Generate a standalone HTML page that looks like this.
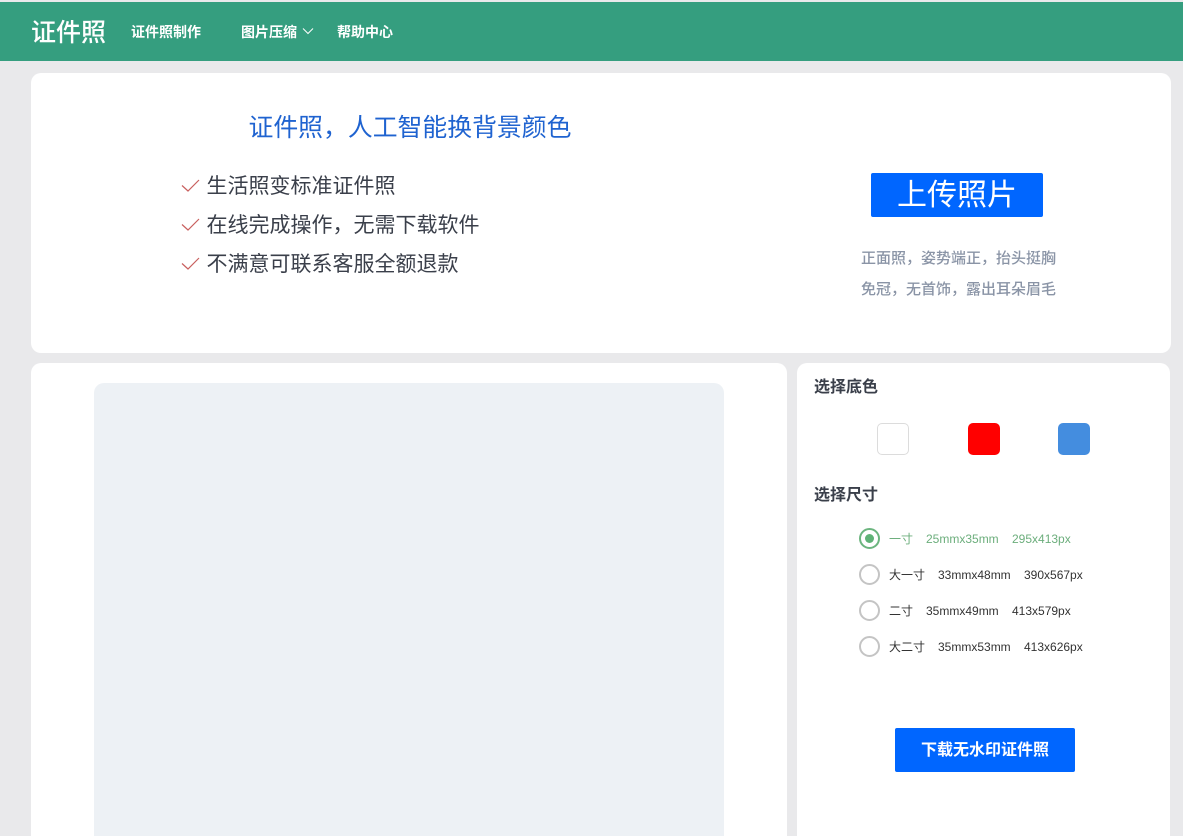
<!DOCTYPE html>
<html lang="zh">
<head>
<meta charset="utf-8">
<title>证件照</title>
<style>
*{box-sizing:border-box;margin:0;padding:0}
html,body{width:1183px;height:836px;overflow:hidden;background:#e9e9eb;font-family:"Liberation Sans","Noto Sans CJK SC",sans-serif}
#w{position:relative;width:1183px;height:836px;overflow:hidden;background:#e9e9eb}
.a{position:absolute;white-space:nowrap}
.card{position:absolute;background:#fff;border-radius:10px}
.nav{font-size:14px;font-weight:700;color:#fff;line-height:20px;top:22px}
.li{font-size:21px;color:#3a3f4a;line-height:30px;left:206.5px}
.tip{font-size:15px;color:#8a94a6;line-height:20px;left:861px;font-weight:500}
.h{font-size:16px;font-weight:700;color:#3a3f4a;line-height:22px;left:814px}
.sw{position:absolute;top:423px;width:32px;height:32px;border-radius:5px}
.r{position:absolute;left:859px;width:21px;height:21px;border-radius:50%;border:2px solid #c4c4c4;background:#fff}
.t{font-size:12px;color:#333;line-height:16px}
.g{color:#6cae7c}
</style>
</head>
<body>
<div id="w">
<div class="a" style="left:0;top:2px;width:1183px;height:59px;background:#359e7f"></div>
<div class="a" style="left:31px;top:15px;font-size:25px;line-height:36px;color:#fff;font-weight:500">证件照</div>
<div class="a nav" style="left:131px">证件照制作</div>
<div class="a nav" style="left:241px">图片压缩</div>
<svg class="a" style="left:302px;top:27px" width="12" height="9" viewBox="0 0 12 9"><path d="M1 1.5 L6 6.5 L11 1.5" fill="none" stroke="#fff" stroke-width="1"/></svg>
<div class="a nav" style="left:337px">帮助中心</div>

<div class="card" style="left:31px;top:73px;width:1140px;height:280px"></div>
<div class="a" style="left:248.5px;top:111px;font-size:24.85px;line-height:36px;color:#1f63d0">证件照，人工智能换背景颜色</div>
<svg class="a" style="left:181px;top:179px" width="19" height="14" viewBox="0 0 19 14"><path d="M1 6.5 L7 12 L18 1" fill="none" stroke="#c9605f" stroke-width="1.2"/></svg>
<div class="a li" style="top:172px">生活照变标准证件照</div>
<svg class="a" style="left:181px;top:218px" width="19" height="14" viewBox="0 0 19 14"><path d="M1 6.5 L7 12 L18 1" fill="none" stroke="#c9605f" stroke-width="1.2"/></svg>
<div class="a li" style="top:211px">在线完成操作，无需下载软件</div>
<svg class="a" style="left:181px;top:257px" width="19" height="14" viewBox="0 0 19 14"><path d="M1 6.5 L7 12 L18 1" fill="none" stroke="#c9605f" stroke-width="1.2"/></svg>
<div class="a li" style="top:250px">不满意可联系客服全额退款</div>

<div class="a" style="left:871px;top:173px;width:172px;height:44px;background:#0066ff;border-radius:2px;color:#fff;font-size:30px;line-height:46px;text-align:center">上传照片</div>
<div class="a tip" style="top:248.5px">正面照，姿势端正，抬头挺胸</div>
<div class="a tip" style="top:279.5px">免冠，无首饰，露出耳朵眉毛</div>

<div class="card" style="left:31px;top:363px;width:756px;height:500px"></div>
<div class="a" style="left:94px;top:383px;width:630px;height:480px;background:#edf1f5;border-radius:10px"></div>

<div class="card" style="left:797px;top:363px;width:373px;height:500px"></div>
<div class="a h" style="top:377px">选择底色</div>
<div class="sw" style="left:877px;background:#fff;border:1px solid #dcdcdc"></div>
<div class="sw" style="left:968px;background:#ff0000"></div>
<div class="sw" style="left:1058px;background:#448ddf"></div>
<div class="a h" style="top:485px">选择尺寸</div>

<div class="r" style="top:528px;border-color:#6cb57f"></div>
<div class="a" style="left:865px;top:534px;width:9px;height:9px;border-radius:50%;background:#5fb277"></div>
<div class="a t g" style="left:889px;top:531px">一寸</div>
<div class="a t g" style="left:926px;top:531px">25mmx35mm</div>
<div class="a t g" style="left:1012px;top:531px">295x413px</div>

<div class="r" style="top:564px"></div>
<div class="a t" style="left:889px;top:567px">大一寸</div>
<div class="a t" style="left:938px;top:567px">33mmx48mm</div>
<div class="a t" style="left:1024px;top:567px">390x567px</div>

<div class="r" style="top:600px"></div>
<div class="a t" style="left:889px;top:603px">二寸</div>
<div class="a t" style="left:926px;top:603px">35mmx49mm</div>
<div class="a t" style="left:1012px;top:603px">413x579px</div>

<div class="r" style="top:636px"></div>
<div class="a t" style="left:889px;top:639px">大二寸</div>
<div class="a t" style="left:938px;top:639px">35mmx53mm</div>
<div class="a t" style="left:1024px;top:639px">413x626px</div>

<div class="a" style="left:895px;top:728px;width:180px;height:44px;background:#0066ff;border-radius:2px;color:#fff;font-size:16px;font-weight:700;line-height:46px;text-align:center">下载无水印证件照</div>
</div>
</body>
</html>
